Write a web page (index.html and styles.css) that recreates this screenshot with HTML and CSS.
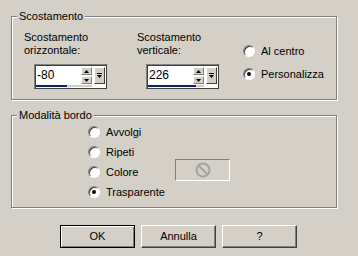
FILE: index.html
```html
<!DOCTYPE html>
<html>
  <head>
    <meta charset="utf-8">
    <title>Scostamento</title>
    <link rel="stylesheet" href="styles.css">
  </head>
  <body>
    <div class="dialog">
      <div class="group g1">
        <span class="legend">Scostamento</span>
        <div class="cols">
          <div class="col c1">
            <div class="lbl">Scostamento<br>orizzontale:</div>
            <div class="spin">
              <div class="spin-main">
                <div class="spin-row">
                  <span class="spin-val">-80</span>
                  <span class="spin-arrows">
                    <i class="sa"><svg width="5" height="3"><path d="M2.5 0 L5 3 L0 3Z" fill="#000"/></svg></i>
                    <i class="sa"><svg width="5" height="3"><path d="M0 0 L5 0 L2.5 3Z" fill="#000"/></svg></i>
                  </span>
                </div>
                <div class="spin-bar"><div class="spin-fill" style="width:55%"></div></div>
              </div>
              <span class="spin-drop"><svg width="7" height="6"><path d="M1 0.5 H6" stroke="#000"/><path d="M1 2 L6 2 L3.5 5Z" fill="#000"/></svg></span>
            </div>
          </div>
          <div class="col c2">
            <div class="lbl">Scostamento<br>verticale:</div>
            <div class="spin">
              <div class="spin-main">
                <div class="spin-row">
                  <span class="spin-val">226</span>
                  <span class="spin-arrows">
                    <i class="sa"><svg width="5" height="3"><path d="M2.5 0 L5 3 L0 3Z" fill="#000"/></svg></i>
                    <i class="sa"><svg width="5" height="3"><path d="M0 0 L5 0 L2.5 3Z" fill="#000"/></svg></i>
                  </span>
                </div>
                <div class="spin-bar"><div class="spin-fill" style="width:86%"></div></div>
              </div>
              <span class="spin-drop"><svg width="7" height="6"><path d="M1 0.5 H6" stroke="#000"/><path d="M1 2 L6 2 L3.5 5Z" fill="#000"/></svg></span>
            </div>
          </div>
          <div class="col c3">
            <label class="opt"><span class="radio"></span>Al centro</label>
            <label class="opt"><span class="radio on"></span>Personalizza</label>
          </div>
        </div>
      </div>

      <div class="group g2">
        <span class="legend">Modalità bordo</span>
        <div class="opts">
          <label class="opt"><span class="radio"></span>Avvolgi</label>
          <label class="opt"><span class="radio"></span>Ripeti</label>
          <div class="opt-row">
            <label class="opt wide"><span class="radio"></span>Colore</label>
            <span class="swatch">
              <svg width="16" height="16" viewBox="0 0 16 16"><circle cx="8" cy="8" r="6.5" fill="none" stroke="#a4a19c" stroke-width="2"/><path d="M3.6 3.6 L12.4 12.4" stroke="#a4a19c" stroke-width="2"/></svg>
            </span>
          </div>
          <label class="opt"><span class="radio on"></span>Trasparente</label>
        </div>
      </div>

      <div class="buttons">
        <button class="btn def">OK</button>
        <button class="btn">Annulla</button>
        <button class="btn">?</button>
      </div>
    </div>
  </body>
</html>
```

FILE: styles.css
```css
html, body {
  margin: 0;
  background: #d4d0c8;
}
body {
  font-family: "Liberation Sans", Arial, sans-serif;
  font-size: 11px;
  line-height: 13px;
  color: #000;
}
.dialog {
  width: 358px;
  height: 256px;
  padding: 16px 0 0 11px;
  box-sizing: border-box;
}
.group {
  position: relative;
  width: 326px;
  box-sizing: border-box;
  border: 1px solid #808080;
  box-shadow: inset 1px 1px #fff, 1px 1px #fff;
}
.legend {
  position: absolute;
  top: -7px;
  left: 5px;
  padding: 0 2px;
  background: #d4d0c8;
}
.g1 {
  height: 84px;
  padding: 14px 0 0 12px;
}
.g2 {
  height: 93px;
  margin-top: 15px;
  padding: 6px 0 0 76px;
}
.cols {
  display: flex;
}
.c1 { width: 113px; }
.c2 { width: 106px; }
.c1 .spin { margin-left: 10px; }
.c2 .spin { margin-left: 9px; }
.c3 {
  padding-top: 12px;
  display: flex;
  flex-direction: column;
  gap: 7px;
}
.lbl {
  height: 26px;
  margin-bottom: 7px;
}

/* spin edit */
.spin {
  display: flex;
  width: 73px;
  height: 25px;
  box-sizing: border-box;
  padding: 1px;
  border: 1px solid;
  border-color: #808080 #404040 #404040 #808080;
  box-shadow: inset 1px 1px #404040;
  background: #fff;
}
.spin-main {
  width: 56px;
  display: flex;
  flex-direction: column;
}
.spin-row {
  display: flex;
  height: 19px;
}
.spin-val {
  flex: 1;
  font-size: 12px;
  line-height: 18px;
  padding-left: 1px;
}
.spin-arrows {
  width: 11px;
  display: flex;
  flex-direction: column;
  padding-top: 1px;
  gap: 1px;
}
.sa {
  height: 8px;
  box-sizing: border-box;
  display: flex;
  align-items: center;
  justify-content: center;
  background: #d4d0c8;
  border: 1px solid;
  border-color: #fff #808080 #808080 #fff;
}
.spin-bar {
  height: 2px;
  background: #d4d0c8;
}
.spin-fill {
  height: 2px;
  background: #0a246a;
}
.spin-drop {
  width: 11px;
  height: 17px;
  margin: 1px 0 0 2px;
  box-sizing: border-box;
  display: flex;
  align-items: center;
  justify-content: center;
  background: #d4d0c8;
  border: 1px solid;
  border-color: #fff #404040 #404040 #fff;
}

/* radios */
.opt {
  display: flex;
  align-items: center;
  height: 16px;
  gap: 6px;
}
.radio {
  position: relative;
  width: 12px;
  height: 12px;
  box-sizing: border-box;
  border-radius: 50%;
  border: 1px solid;
  border-color: #808080 #fff #fff #808080;
  box-shadow: inset 1px 1px #404040;
  background: #fff;
}
.radio.on::after {
  content: "";
  position: absolute;
  left: 3px;
  top: 3px;
  width: 4px;
  height: 4px;
  border-radius: 50%;
  background: #000;
}
.opts {
  display: flex;
  flex-direction: column;
}
.opts > .opt, .opt-row {
  height: 20px;
}
.opt-row {
  display: flex;
  align-items: center;
}
.opt.wide {
  width: 87px;
}
.swatch {
  width: 55px;
  height: 22px;
  margin-top: -4px;
  box-sizing: border-box;
  border: 1px solid;
  border-color: #808080 #fff #fff #808080;
  display: flex;
  align-items: center;
  justify-content: center;
}

/* buttons */
.buttons {
  display: flex;
  gap: 6px;
  margin: 17px 0 0 49px;
}
.btn {
  width: 75px;
  height: 23px;
  padding: 0;
  font: inherit;
  color: #000;
  background: #d4d0c8;
  border: 1px solid;
  border-color: #fff #404040 #404040 #fff;
  box-shadow: inset -1px -1px #808080;
}
.btn.def {
  border-color: #000;
  box-shadow: inset 1px 1px #fff, inset -1px -1px #808080;
}
```
